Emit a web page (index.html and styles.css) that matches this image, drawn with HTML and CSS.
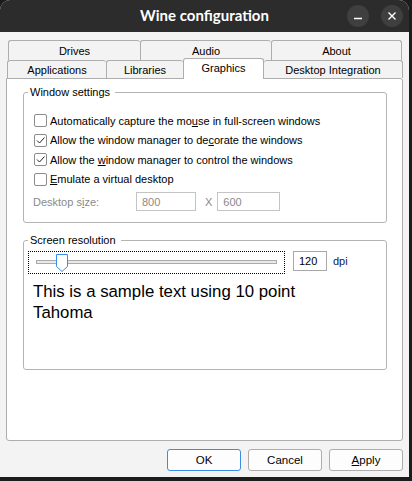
FILE: index.html
```html
<!DOCTYPE html>
<html>
<head>
<meta charset="utf-8">
<title>Wine configuration</title>
<link rel="stylesheet" href="styles.css">
</head>
<body>
<div class="window">
  <header class="titlebar">
    <span></span>
    <span class="title">Wine configuration</span>
    <div class="wm">
      <span class="wm-btn"><svg width="22" height="22" viewBox="0 0 22 22"><path d="M7 13.5h8" stroke="#fff" stroke-width="1.4"/></svg></span>
      <span class="wm-btn"><svg width="22" height="22" viewBox="0 0 22 22"><path d="M7.5 7.5l7 7M14.5 7.5l-7 7" stroke="#fff" stroke-width="1.4"/></svg></span>
    </div>
  </header>

  <div class="tabs">
    <div class="tabrow back">
      <div class="tab w132">Drives</div>
      <div class="tab w131">Audio</div>
      <div class="tab w131 last">About</div>
    </div>
    <div class="tabrow front">
      <div class="tab w99">Applications</div>
      <div class="tab w77">Libraries</div>
      <div class="tab w81 active">Graphics</div>
      <div class="tab w139 last after-active">Desktop Integration</div>
    </div>
  </div>

  <div class="panel">
    <fieldset class="group g1">
      <legend>Window settings</legend>
      <div class="content">
        <label class="check"><span class="box"></span><span>Automatically capture the mo<u>u</u>se in full-screen windows</span></label>
        <label class="check"><span class="box"><svg width="11" height="11" viewBox="0 0 11 11"><path d="M2 5.5l2.5 2.5 5-5.5" fill="none" stroke="#222" stroke-width="1"/></svg></span><span>Allow the window manager to de<u>c</u>orate the windows</span></label>
        <label class="check"><span class="box"><svg width="11" height="11" viewBox="0 0 11 11"><path d="M2 5.5l2.5 2.5 5-5.5" fill="none" stroke="#222" stroke-width="1"/></svg></span><span>Allow the <u>w</u>indow manager to control the windows</span></label>
        <label class="check"><span class="box"></span><span><u>E</u>mulate a virtual desktop</span></label>
        <div class="sizerow">
          <span class="sizelabel">Desktop s<u>i</u>ze:</span>
          <span class="input disabled w60">800</span>
          <span class="times">X</span>
          <span class="input disabled w63">600</span>
        </div>
      </div>
    </fieldset>

    <fieldset class="group g2">
      <legend>Screen resolution</legend>
      <div class="content">
        <div class="sliderrow">
          <div class="focusrect">
            <div class="track">
              <svg class="thumb" width="12" height="18" viewBox="0 0 12 18"><path d="M0.5 0.5H11.5V12.5L6 17.5L0.5 12.5Z" fill="#fff" stroke="#3c8ce7" stroke-width="1"/></svg>
            </div>
          </div>
          <div class="dpi">
            <span class="input w34">120</span>
            <span class="dpilabel">dpi</span>
          </div>
        </div>
        <p class="sample">This is a sample text using 10 point<br>Tahoma</p>
      </div>
    </fieldset>
  </div>

  <div class="buttons">
    <button class="btn default">OK</button>
    <button class="btn">Cancel</button>
    <button class="btn"><u>A</u>pply</button>
  </div>
</div>
</body>
</html>
```

FILE: styles.css
```css
* { box-sizing: border-box; }
html, body { margin: 0; }
body {
  background: #1c1c1c;
  width: 412px;
  height: 481px;
  overflow: hidden;
  font-family: "Liberation Sans", Arial, sans-serif;
  font-size: 11px;
  color: #000;
}
.window {
  width: 409px;
  height: 477px;
  background: #f3f3f3;
  border-radius: 10px 10px 0 0;
  overflow: hidden;
  display: flex;
  flex-direction: column;
}
.titlebar {
  flex: none;
  height: 32px;
  background: #2c2c2c;
  display: grid;
  grid-template-columns: 1fr auto 1fr;
  align-items: center;
}
.title {
  font-family: Lato, "Noto Sans", sans-serif;
  font-weight: 700;
  font-size: 15px;
  color: #fff;
  margin-top: -3px;
}
.wm {
  display: flex;
  justify-content: flex-end;
  gap: 12px;
  padding-right: 6px;
}
.wm-btn {
  width: 22px;
  height: 22px;
  border-radius: 50%;
  background: #3f3f3f;
  display: flex;
}

.tabs { margin-top: 8px; flex: none; }
.tabrow { display: flex; }
.tabrow.back { margin-left: 8px; height: 20px; }
.tabrow.front { margin-left: 7px; height: 18px; align-items: flex-start; }
.tab {
  height: 100%;
  border: 1px solid #adadad;
  border-right: none;
  border-bottom: none;
  border-radius: 3px 3px 0 0;
  display: flex;
  align-items: center;
  justify-content: center;
  background: #f3f3f3;
}
.tab.last { border-right: 1px solid #adadad; }
.tab.after-active { border-left: none; }
.tab.active {
  background: #fff;
  border-right: 1px solid #adadad;
  height: 21px;
  margin-top: -2px;
  padding-bottom: 2px;
  position: relative;
  z-index: 1;
}
.w132 { width: 132px; }
.w131 { width: 131px; }
.w99 { width: 99px; }
.w77 { width: 77px; }
.w81 { width: 81px; }
.w139 { width: 139px; }

.panel {
  flex: none;
  margin-left: 6px;
  width: 397px;
  height: 363px;
  background: #fff;
  border: 1px solid #adadad;
  border-radius: 0 3px 3px 3px;
  padding: 6px 0 0 16px;
}
.group {
  margin: 0;
  padding: 0;
  min-width: 0;
  width: 364px;
  border: 1px solid #b4b4b4;
  border-radius: 3px;
}
.group legend {
  margin-left: 4px;
  padding: 0 5px 0 2px;
  line-height: 14px;
}
.g1 { height: 138px; }
.g2 { height: 137px; margin-top: 10px; }

.g1 .content { padding: 12px 0 0 10px; }
.check {
  display: flex;
  align-items: center;
  gap: 3px;
  height: 19.5px;
}
.box {
  width: 13px;
  height: 13px;
  border: 1px solid #8c8c8c;
  border-radius: 2px;
  background: #fff;
  display: flex;
  align-items: center;
  justify-content: center;
}
.box svg { display: block; }

.sizerow {
  display: flex;
  align-items: center;
  height: 19px;
  margin-top: 3px;
  color: #8a8a8a;
}
.sizelabel { width: 103px; margin-left: -1px; }
.input {
  height: 19px;
  border: 1px solid #a8a8a8;
  background: #fff;
  padding-left: 5px;
  display: flex;
  align-items: center;
}
.input.disabled { border-color: #c4c4c4; color: #8a8a8a; }
.w60 { width: 60px; }
.w63 { width: 63px; }
.w34 { width: 34px; height: 20px; }
.times { margin: 0 5px 0 9px; }

.g2 .content { padding: 4px 0 0 4px; }
.sliderrow { display: flex; align-items: flex-start; }
.focusrect {
  width: 257px;
  height: 23px;
  border: 1px dotted #000;
  padding: 8px 7px 0 7px;
}
.track {
  position: relative;
  height: 4px;
  border: 1px solid #ababab;
  background: #e9e9e9;
}
.thumb {
  position: absolute;
  left: 19px;
  top: -7px;
  display: block;
}
.dpi {
  display: flex;
  align-items: center;
  margin-left: 8px;
}
.dpilabel { margin-left: 6px; color: #10204a; }
.sample {
  margin: 7px 0 0 5px;
  font-size: 16.8px;
  line-height: 21px;
}

.buttons {
  flex: none;
  display: flex;
  justify-content: flex-end;
  gap: 7px;
  padding-right: 6px;
  margin-top: 8px;
}
.btn {
  width: 74px;
  height: 22px;
  border: 1px solid #adadad;
  border-radius: 3px;
  background: #fdfdfd;
  font-family: inherit;
  font-size: 11.5px;
  color: #000;
  padding: 0;
}
.btn.default { border-color: #3c8ce7; }
```
